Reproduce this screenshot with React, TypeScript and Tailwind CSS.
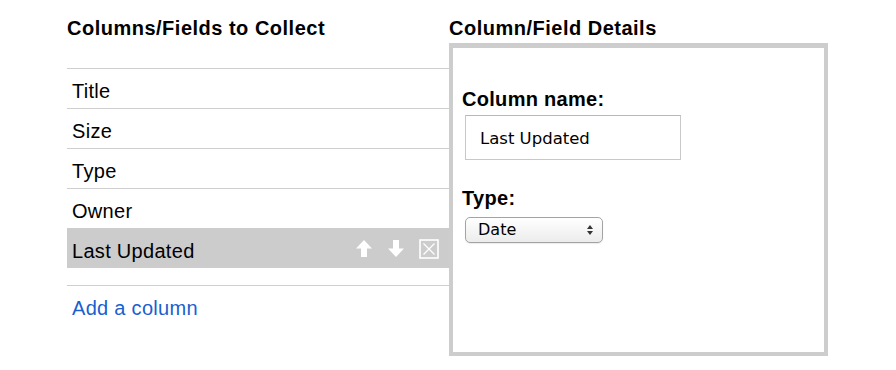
import React, { useState } from 'react';

const columns = ['Title', 'Size', 'Type', 'Owner', 'Last Updated'];

function ArrowUp() {
  return (
    <svg width="16" height="17" viewBox="0 0 16 17">
      <polygon points="8,0 16,8.5 11,8.5 11,17 5,17 5,8.5 0,8.5" fill="#ffffff" />
    </svg>
  );
}

function ArrowDown() {
  return (
    <svg width="16" height="17" viewBox="0 0 16 17">
      <polygon points="8,17 16,8.5 11,8.5 11,0 5,0 5,8.5 0,8.5" fill="#ffffff" />
    </svg>
  );
}

function RemoveBox() {
  return (
    <svg width="20" height="20" viewBox="0 0 20 20">
      <rect x="1" y="1" width="18" height="18" fill="none" stroke="#ffffff" strokeWidth="1.6" />
      <path d="M4.5 4.5 L15.5 15.5 M15.5 4.5 L4.5 15.5" stroke="#ffffff" strokeWidth="1.3" />
    </svg>
  );
}

export default function App() {
  const [selected, setSelected] = useState('Last Updated');

  return (
    <div className="min-h-screen bg-white font-['Liberation_Sans',Arial,sans-serif] text-black">
      <div className="flex pl-[67px] pt-[16px]">
        {/* Lista de colunas */}
        <div className="w-[382px]">
          <h2 className="text-[20px] leading-[24px] font-bold tracking-[0.5px]">Columns/Fields to Collect</h2>
          <ul className="mt-[28px]">
            {columns.map((col) => {
              const active = col === selected;
              return (
                <li
                  key={col}
                  onClick={() => setSelected(col)}
                  className={
                    active
                      ? 'flex h-[40px] items-center justify-between border-t border-[#cccccc] bg-[#cccccc] pl-[5px] pr-[10px] pt-[4px] text-[20px] tracking-[0.3px]'
                      : 'flex h-[40px] items-center border-t border-[#cfcfcf] pl-[5px] pt-[4px] text-[20px] tracking-[0.3px]'
                  }
                >
                  <span>{col}</span>
                  {active && (
                    <div className="-mt-[4px] flex items-center">
                      <ArrowUp />
                      <span className="ml-[16px] flex"><ArrowDown /></span>
                      <span className="ml-[15px] flex"><RemoveBox /></span>
                    </div>
                  )}
                </li>
              );
            })}
          </ul>
          <div className="mt-[17px] border-t border-[#cfcfcf] pl-[5px] pt-[10px]">
            <a className="text-[20px] leading-[24px] tracking-[0.3px] text-[#1a5fcf] cursor-pointer">Add a column</a>
          </div>
        </div>

        {/* Detalhes */}
        <div className="w-[379px]">
          <h2 className="text-[20px] leading-[24px] font-bold tracking-[0.5px]">Column/Field Details</h2>
          <div className="mt-[3px] h-[313px] border-4 border-t-[5px] border-[#cdcdcd] pl-[9px] pt-[39px]">
            <label className="block text-[20px] leading-[24px] font-bold tracking-[0.3px]">Column name:</label>
            <div className="ml-[3px] mt-[4px] flex h-[45px] w-[216px] items-center border border-[#c8c8c8] border-t-[#b8b8b8] pl-[14px] pt-[3px] font-['DejaVu_Sans',sans-serif] text-[16.5px]">
              {selected}
            </div>
            <label className="mt-[26px] block text-[20px] leading-[24px] font-bold tracking-[0.3px]">Type:</label>
            <div className="ml-[3px] mt-[7px] flex h-[26px] w-[138px] items-center justify-between rounded-[5px] border border-[#a3a3a3] bg-gradient-to-b from-white to-[#ececec] pl-[12px] pr-[9px] font-['DejaVu_Sans',sans-serif] text-[16px] shadow-[0_1px_1px_rgba(0,0,0,0.08)]">
              <span>Date</span>
              <svg width="6" height="10" viewBox="0 0 6 10">
                <polygon points="3,0 6,4 0,4" fill="#333" />
                <polygon points="3,10 6,6 0,6" fill="#333" />
              </svg>
            </div>
          </div>
        </div>
      </div>
    </div>
  );
}
